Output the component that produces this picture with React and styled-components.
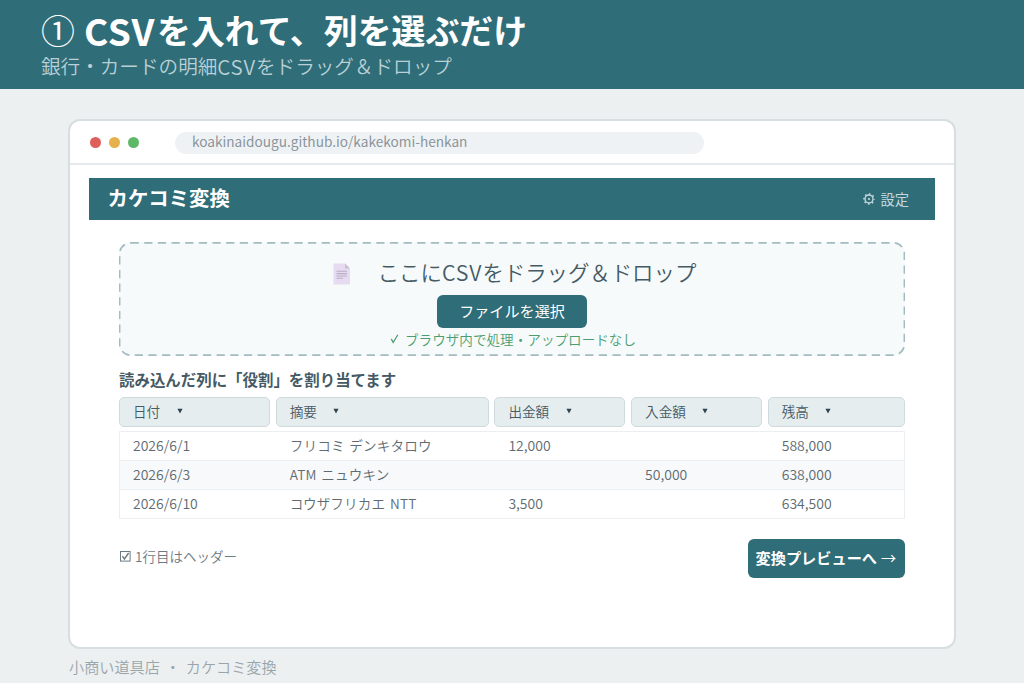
import React from 'react'
import styled, { createGlobalStyle } from 'styled-components'

const colors = {
  teal: '#2f6d78',
  page: '#ecf0f1',
  ink: '#455a64',
  muted: '#8a959b',
}

const GlobalStyle = createGlobalStyle`
  * {
    box-sizing: border-box;
  }
  body {
    margin: 0;
    background: ${colors.page};
    font-family: "Noto Sans CJK JP", sans-serif;
  }
`

const columns = ['日付', '摘要', '出金額', '入金額', '残高']

const rows = [
  ['2026/6/1', 'フリコミ デンキタロウ', '12,000', '', '588,000'],
  ['2026/6/3', 'ATM ニュウキン', '', '50,000', '638,000'],
  ['2026/6/10', 'コウザフリカエ NTT', '3,500', '', '634,500'],
]

function GearIcon() {
  return (
    <svg width="12" height="12" viewBox="0 0 12 12" fill="none" stroke="#c3d8dd">
      <circle cx="6" cy="6" r="4" strokeWidth="1.4" />
      <circle cx="6" cy="6" r="5.1" strokeWidth="1.5" strokeDasharray="1.6 2.405" strokeDashoffset="0.8" />
      <circle cx="6" cy="6" r="1.1" fill="#c3d8dd" stroke="none" />
    </svg>
  )
}

function PageIcon() {
  return (
    <svg width="18" height="22" viewBox="0 0 18 22">
      <path d="M0.5 0.5H12L17 5.5V21.5H0.5Z" fill="#e6dbf0" />
      <path d="M12 0.5L17 5.5H12Z" fill="#c9bfd3" />
      <path d="M3.5 8.2H14M3.5 10.6H14M3.5 13H14M3.5 15.3H10" stroke="#b9aec4" strokeWidth="1.1" />
    </svg>
  )
}

function CheckBoxIcon() {
  return (
    <svg width="11" height="11" viewBox="0 0 11 11" fill="none" stroke="#6c7a83">
      <rect x="0.5" y="0.5" width="9.6" height="9.6" strokeWidth="1" />
      <path d="M2.4 5.2L4.4 8L8.6 2" strokeWidth="1.4" />
    </svg>
  )
}

function CheckIcon() {
  return (
    <svg width="9" height="10" viewBox="0 0 9 10" fill="none" stroke="#4a9d70">
      <path d="M1.2 5L3.2 8.6L7.8 0.8M1.2 5L3.4 8" strokeWidth="1.2" />
    </svg>
  )
}

function Caret() {
  return (
    <svg width="6" height="6" viewBox="0 0 6 6">
      <path d="M0.4 0.8H5.6L3 5.6Z" fill="#2f4550" />
    </svg>
  )
}

export default function App() {
  return (
    <>
      <GlobalStyle />
      <Banner>
        <Title>
          <Numeral>①</Numeral>
          <TitleLatin>CSV</TitleLatin>を入れて、列を選ぶだけ
        </Title>
        <Subtitle>
          銀行・カードの明細<SubtitleLatin>CSV</SubtitleLatin>をドラッグ＆ドロップ
        </Subtitle>
      </Banner>
      <Browser>
        <BrowserBar>
          <Dot $color="#df5f5a" />
          <Dot $color="#e6b04c" />
          <Dot $color="#5fb868" />
          <Address>koakinaidougu.github.io/kakekomi-henkan</Address>
        </BrowserBar>
        <AppBar>
          <AppName>カケコミ変換</AppName>
          <Settings>
            <GearIcon />
            設定
          </Settings>
        </AppBar>
        <Content>
          <DropZone>
            <Outline>
              <rect x="0.6" y="0.8" width="784.8" height="112.4" rx="11" />
            </Outline>
            <DropLabel>
              <PageIcon />
              <DropText>
                ここに<DropLatin>CSV</DropLatin>をドラッグ＆ドロップ
              </DropText>
            </DropLabel>
            <FileButton>ファイルを選択</FileButton>
            <Note>
              <CheckIcon />
              ブラウザ内で処理・アップロードなし
            </Note>
          </DropZone>
          <Heading>読み込んだ列に「役割」を割り当てます</Heading>
          <ColumnGrid>
            {columns.map((name) => (
              <ColumnSelect key={name}>
                {name}
                <Caret />
              </ColumnSelect>
            ))}
          </ColumnGrid>
          <Rows>
            {rows.map((row) => (
              <Row key={row[0]}>
                {row.map((cell, i) => (
                  <Cell key={i} $numeric={i !== 1}>{cell}</Cell>
                ))}
              </Row>
            ))}
          </Rows>
          <Actions>
            <HeaderOption>
              <CheckBoxIcon />
              1行目はヘッダー
            </HeaderOption>
            <PreviewButton>
              変換プレビューへ<Arrow>→</Arrow>
            </PreviewButton>
          </Actions>
        </Content>
      </Browser>
      <Footer>小商い道具店 ・ カケコミ変換</Footer>
    </>
  )
}

const Banner = styled.header`
  height: 89px;
  padding: 10px 41px 0;
  background: ${colors.teal};
`

const Title = styled.h1`
  display: flex;
  align-items: center;
  height: 40px;
  margin: 0;
  color: #fff;
  font-size: 33.9px;
  font-weight: 700;
  line-height: 40px;
  white-space: nowrap;
`

const Numeral = styled.span`
  width: 43px;
  font-weight: 400;
`

const TitleLatin = styled.span`
  width: 73px;
  font-size: 37px;
  letter-spacing: 0.6px;
`

const Subtitle = styled.p`
  display: flex;
  align-items: center;
  height: 28px;
  margin: 2px 0 0;
  color: #b9d0d6;
  font-size: 19.6px;
  font-weight: 350;
  line-height: 28px;
  white-space: nowrap;
`

const SubtitleLatin = styled.span`
  font-size: 20.5px;
  letter-spacing: 0.8px;
`

const Browser = styled.main`
  width: 888px;
  height: 530px;
  margin: 30px auto 0 68px;
  border: 2px solid #d6dee1;
  border-radius: 12px;
  background: #fff;
`

const BrowserBar = styled.div`
  display: flex;
  align-items: center;
  gap: 8px;
  height: 44px;
  padding: 1px 0 0 20px;
  border-bottom: 2px solid #e6eaec;
`

const Dot = styled.span`
  width: 11px;
  height: 11px;
  border-radius: 50%;
  background: ${({ $color }) => $color};
`

const Address = styled.div`
  width: 529px;
  height: 22px;
  margin-left: 28px;
  padding-left: 17px;
  border-radius: 11px;
  background: #eff2f4;
  color: ${colors.muted};
  font-size: 13.65px;
  line-height: 19px;
`

const AppBar = styled.div`
  display: flex;
  align-items: center;
  justify-content: space-between;
  width: 846px;
  height: 42px;
  margin: 13px 0 0 19px;
  padding: 0 26px 0 18.5px;
  background: ${colors.teal};
`

const AppName = styled.h2`
  margin: 0 0 5px;
  color: #fff;
  font-size: 20.4px;
  line-height: 28px;
`

const Settings = styled.div`
  display: flex;
  align-items: center;
  gap: 5px;
  margin-bottom: 1px;
  color: #c3d8dd;
  font-size: 14.3px;
  line-height: 20px;
`

const Content = styled.div`
  width: 787px;
  margin: 22px 0 0 49px;
`

const DropZone = styled.section`
  position: relative;
  display: flex;
  flex-direction: column;
  align-items: center;
  width: 786px;
  height: 114px;
  padding-top: 15px;
  border-radius: 12px;
  background: #f6fafb;
`

const Outline = styled.svg`
  position: absolute;
  inset: 0;
  width: 100%;
  height: 100%;
  fill: none;
  stroke: #a3bcc1;
  stroke-width: 1.7;
  stroke-dasharray: 8.2 5.45;
`

const DropLabel = styled.div`
  display: flex;
  align-items: center;
  gap: 27px;
  height: 33px;
  padding-left: 5px;
`

const DropText = styled.div`
  display: flex;
  margin-bottom: 4px;
  color: ${colors.ink};
  font-size: 21.4px;
  font-weight: 350;
  line-height: 32px;
  white-space: nowrap;
`

const DropLatin = styled.span`
  letter-spacing: 0.9px;
`

const FileButton = styled.button`
  width: 150px;
  height: 33px;
  margin-top: 5px;
  padding: 0 0 3px;
  border: 0;
  border-radius: 6px;
  background: ${colors.teal};
  color: #fff;
  font-family: inherit;
  font-size: 15.1px;
  line-height: 24px;
`

const Note = styled.div`
  display: flex;
  align-items: center;
  gap: 6px;
  margin-top: 1px;
  padding-left: 2px;
  color: #4a9d70;
  font-size: 13.6px;
  font-weight: 350;
  line-height: 20px;
`

const Heading = styled.h3`
  margin: 11px 0 0;
  color: ${colors.ink};
  font-size: 15.45px;
  line-height: 24px;
`

const ColumnGrid = styled.div`
  display: grid;
  grid-template-columns: 151px 213px 131px 131px 137px;
  column-gap: 5.7px;
  margin-top: 6px;
`

const ColumnSelect = styled.div`
  display: flex;
  align-items: center;
  gap: 16.5px;
  height: 30px;
  padding: 0 13px 2px;
  border: 1px solid #cfdadd;
  border-radius: 5px;
  background: #e6edef;
  color: ${colors.ink};
  font-size: 13.6px;
  font-weight: 350;
`

const Rows = styled.div`
  width: 786px;
  margin-top: 4px;
  border: 1px solid #eceff1;
  border-bottom: 0;
`

const Row = styled.div`
  display: grid;
  grid-template-columns: 151px 213px 131px 131px 134px;
  column-gap: 5.7px;
  height: 29px;
  border-bottom: 1px solid #eceff1;

  &:nth-child(even) {
    background: #f7f9fb;
  }
`

const Cell = styled.div`
  padding-left: 13px;
  color: #606b71;
  font-size: ${({ $numeric }) => ($numeric ? '14px' : '13.6px')};
  font-weight: 350;
  line-height: 27px;
  letter-spacing: ${({ $numeric }) => ($numeric ? '0' : '0.15px')};
  word-spacing: 1.5px;
  white-space: nowrap;
`

const Actions = styled.div`
  display: flex;
  align-items: flex-start;
  justify-content: space-between;
  width: 785.5px;
  margin-top: 20px;
`

const HeaderOption = styled.label`
  display: flex;
  align-items: center;
  gap: 4px;
  margin: 6px 0 0 1px;
  color: #6c7a83;
  font-size: 13.5px;
  font-weight: 350;
  line-height: 22px;
`

const PreviewButton = styled.button`
  display: flex;
  align-items: center;
  gap: 4px;
  width: 157px;
  height: 39px;
  padding: 0 8px 3px;
  border: 0;
  border-radius: 6px;
  background: ${colors.teal};
  color: #fff;
  font-family: inherit;
  font-size: 15.2px;
  font-weight: 700;
  white-space: nowrap;
`

const Arrow = styled.span`
  font-weight: 400;
`

const Footer = styled.footer`
  margin: 5px 0 0 69px;
  color: #9aa5aa;
  font-size: 15.15px;
  font-weight: 350;
  line-height: 24px;
  word-spacing: 2px;
`
